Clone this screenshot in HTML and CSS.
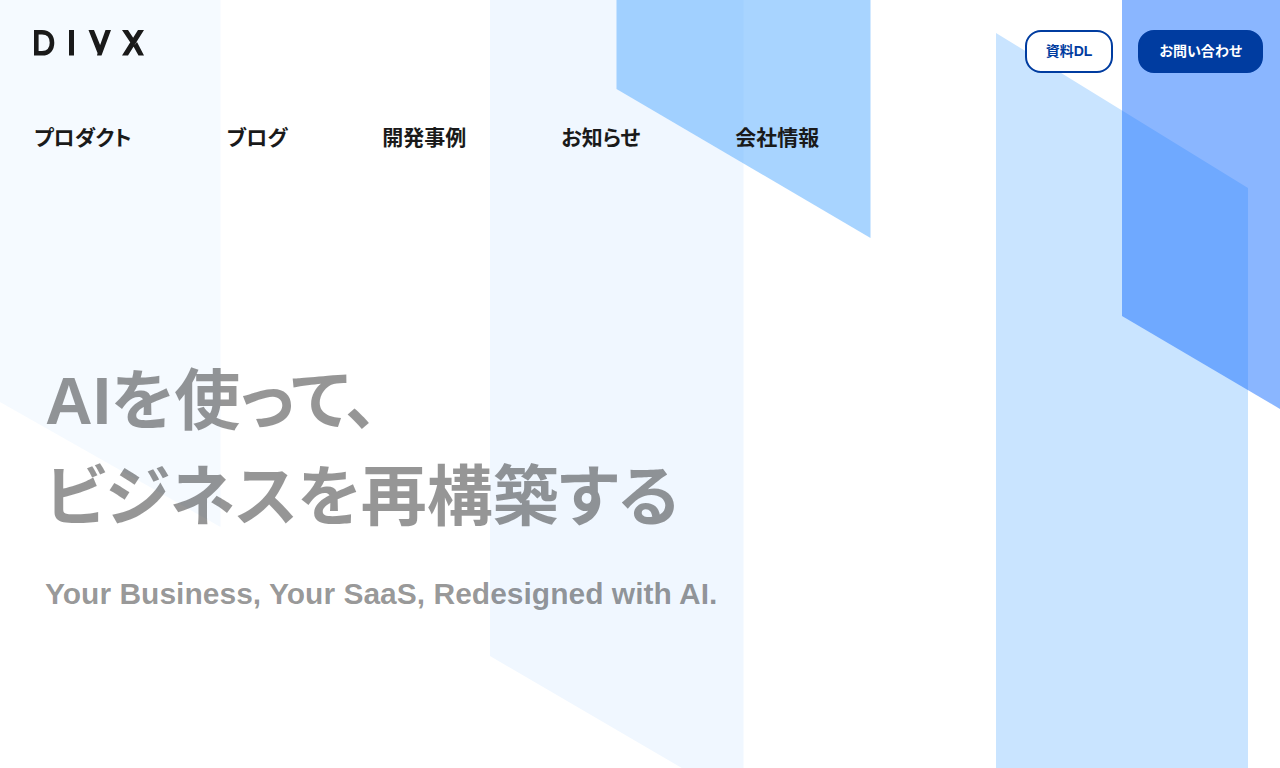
FILE: index.html
```
<!DOCTYPE html>
<html lang="ja">
<head>
    <meta charset="UTF-8">
    <meta name="viewport" content="width=device-width, initial-scale=1">
    <title>DIVX</title>
    <link rel="stylesheet" href="styles.css">
</head>
<body>
    <svg class="bg" viewBox="0 0 1280 768" preserveAspectRatio="none" aria-hidden="true">
        <path d="M0 0H220.500V527L0 402Z" fill="#f5faff"/>
        <path d="M490 0H743.500V804L490 656Z" fill="#f0f7ff"/>
        <path d="M616.500 0H870.500V238L616.500 89Z" fill="#51a9ff" fill-opacity=".5"/>
        <path d="M996 33L1248 188V768H996Z" fill="#c9e4ff"/>
        <path d="M1122 0H1280V409L1122 316Z" fill="#156dff" fill-opacity=".5"/>
    </svg>

    <header class="header">
        <div class="header-top">
            <a class="logo" href="#" aria-label="DIVX">
                <svg viewBox="0 0 110 26" width="110" height="26">
                    <path d="M2.300 2.300H8C15 2.300 18 7 18 12.800S15 23.300 8 23.300H2.300Z" fill="none" stroke="#1a1a1a" stroke-width="4.600"/>
                    <path d="M35 0H40V25.500H35ZM54.500 0H60L66.500 16L63.500 23ZM71.500 0H77L67.500 25.500H63L64 21ZM88 0H94L100 9L97 13.500ZM104 0H110L94 25.500H88ZM99.500 16.500L103 12L110 25.500H104.500Z" fill="#1a1a1a"/>
                </svg>
            </a>
            <div class="header-buttons">
                <a class="btn btn-outline" href="#">資料DL</a>
                <a class="btn btn-fill" href="#">お問い合わせ</a>
            </div>
        </div>
        <nav class="nav">
            <a href="#">プロダクト</a>
            <a href="#">ブログ</a>
            <a href="#">開発事例</a>
            <a href="#">お知らせ</a>
            <a href="#">会社情報</a>
        </nav>
    </header>

    <main class="hero">
        <h1>AIを使って、<br>ビジネスを再構築する</h1>
        <p>Your Business, Your SaaS, Redesigned with AI.</p>
    </main>
</body>
</html>
```
FILE: styles.css
```
* {
    box-sizing: border-box;
}
body {
    margin: 0;
    background-color: #fff;
    color: #1a1a1a;
    font-family: "Liberation Sans", "Noto Sans CJK JP", sans-serif;
    font-feature-settings: "palt";
    font-weight: 700;
}
a {
    color: inherit;
    text-decoration: none;
}
.bg {
    position: absolute;
    top: 0;
    left: 0;
    z-index: -1;
    width: 100%;
    height: 100%;
}
.header {
    padding: 30px 17px 0 34px;
}
.header-top {
    display: flex;
    justify-content: space-between;
    align-items: flex-start;
}
.logo svg {
    display: block;
}
.header-buttons {
    display: flex;
    gap: 25px;
}
.btn {
    height: 43px;
    padding: 0 19px;
    border: 2px solid #003ca0;
    border-radius: 16px;
    font-size: 14px;
    line-height: 39px;
}
.btn-outline {
    background-color: #fff;
    color: #003ca0;
}
.btn-fill {
    background-color: #003ca0;
    color: #fff;
}
.nav {
    display: flex;
    gap: 95px;
    margin-top: 50px;
    font-size: 21px;
    line-height: 30px;
}
.hero {
    padding: 200px 45px 0;
    color: rgba(22, 22, 22, 0.45);
}
.hero h1 {
    margin: 0;
    font-size: 66px;
    line-height: 96px;
}
.hero p {
    margin: 29px 0 0;
    font-size: 30px;
    line-height: 40px;
}
```
